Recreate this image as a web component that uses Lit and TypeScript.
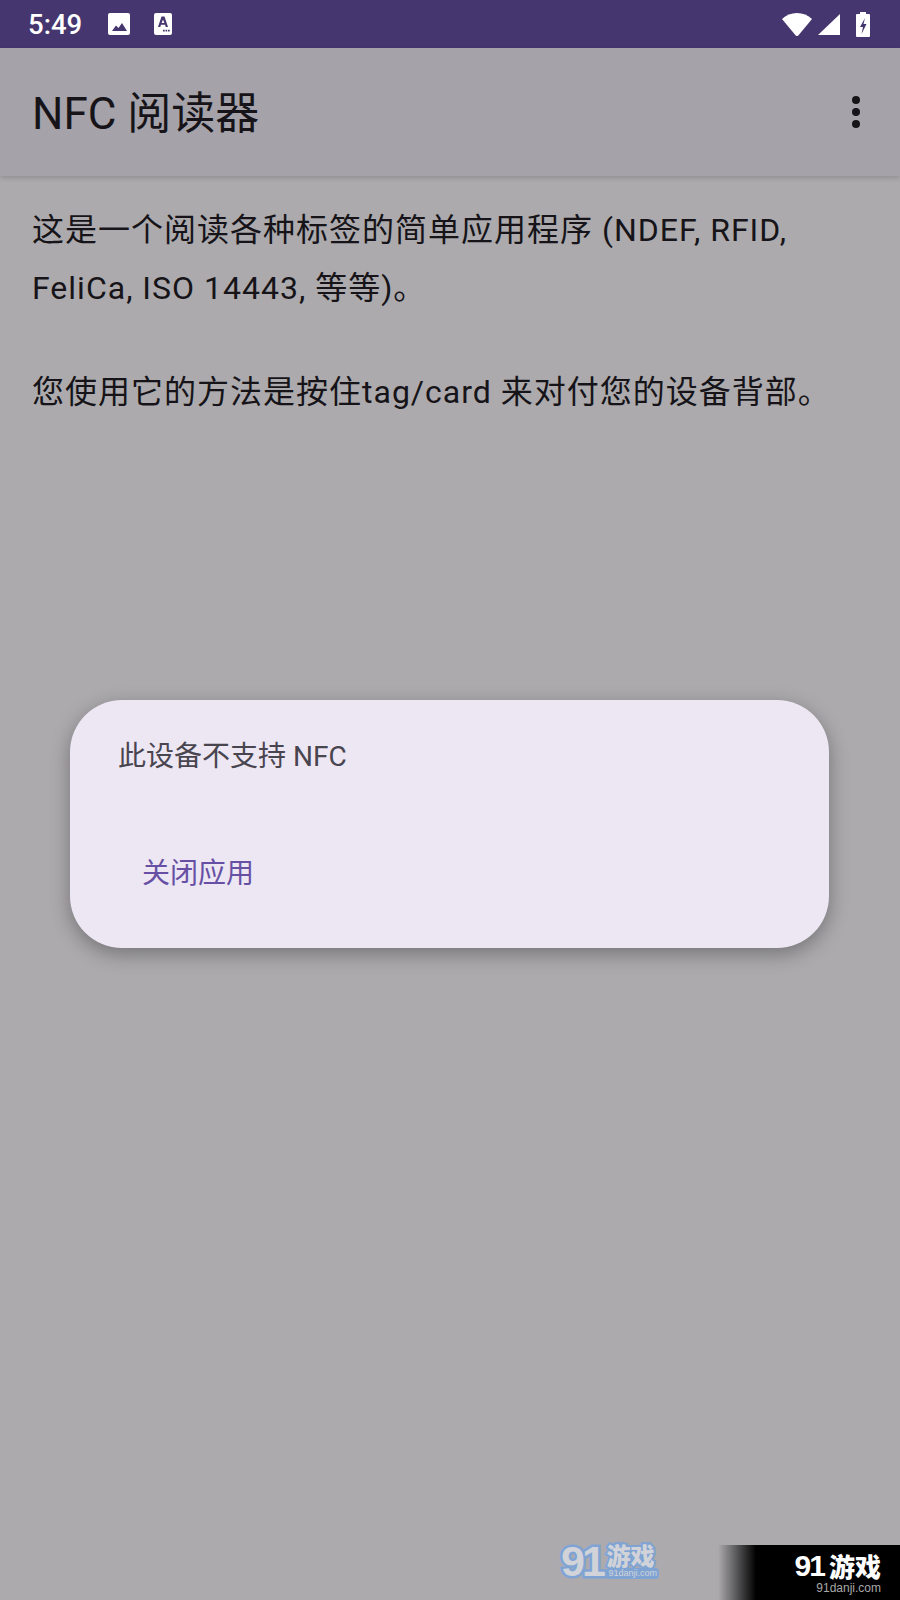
import { LitElement, html, css } from 'lit';
import { customElement } from 'lit/decorators.js';

@customElement('app-root')
export class AppRoot extends LitElement {
  static styles = css`
    :host {
      display: block;
      position: relative;
      width: 900px;
      height: 1600px;
      overflow: hidden;
      background: #acaaad;
      font-family: Roboto, 'Noto Sans CJK SC', sans-serif;
      color: #161418;
    }
    .status {
      height: 48px;
      background: #46366f;
      color: #fff;
      display: flex;
      align-items: center;
      padding: 0 30px 0 28px;
      box-sizing: border-box;
    }
    .time { font-size: 27.500px; font-weight: 500; width: 80px; }
    .status svg { display: block; }
    .status .a { margin-left: 24px; }
    .status .wifi { margin-right: 6px; }
    .status .signal { margin-right: 16px; }
    .spacer { flex: 1; }
    .bar {
      height: 128px;
      background: #a5a2aa;
      display: flex;
      align-items: center;
      padding: 0 32px;
      box-sizing: border-box;
      box-shadow: 0 2px 5px rgba(0, 0, 0, 0.16);
      position: relative;
    }
    .title { flex: 1; font-size: 44px; line-height: 64px; margin-top: 4px; }
    .kebab { margin-right: 8px; }
    .content {
      padding: 25px 32px 0;
      font-size: 32px;
      line-height: 58px;
      letter-spacing: 1px;
    }
    .content p { margin: 0 0 46px; }
    .dialog {
      position: absolute;
      left: 70px;
      top: 700px;
      width: 759px;
      height: 248px;
      box-sizing: border-box;
      background: #ece7f3;
      border-radius: 52px;
      box-shadow: 0 6px 20px rgba(0, 0, 0, 0.32);
      padding: 37px 48px 0;
    }
    .msg { font-size: 28px; line-height: 40px; color: #49454f; }
    .btn { margin: 77px 0 0 24px; font-size: 28px; line-height: 40px; color: #6750a4; }
    .wm1, .wm2 {
      position: absolute;
      font-family: 'Noto Sans CJK SC', sans-serif;
      font-weight: 900;
    }
    .wm1 {
      left: 561px;
      top: 1543px;
      width: 98px;
      height: 40px;
      display: flex;
      align-items: flex-start;
      color: #d2d3d8;
    }
    .wm1 .n {
      font-size: 43px;
      line-height: 36px;
      font-family: 'Liberation Sans', sans-serif;
      font-weight: 700;
      letter-spacing: -3px;
      -webkit-text-stroke: 5px #7fa4d4;
      paint-order: stroke fill;
      width: 46px;
    }
    .wm1 .t {
      font-size: 24px;
      line-height: 24px;
      color: #d2d3d8;
      -webkit-text-stroke: 4px #7fa4d4;
      paint-order: stroke fill;
      display: block;
    }
    .wm1 .u {
      font: 400 9px/11px 'Liberation Sans', sans-serif;
      color: #d2d3d8;
      background: #7fa4d4;
      border-radius: 4px;
      padding: 0 2px;
      display: block;
      margin-top: 1px;
      white-space: nowrap;
    }
    .wm2 {
      left: 718px;
      top: 1545px;
      width: 182px;
      height: 55px;
      background: linear-gradient(90deg, rgba(0, 0, 0, 0) 0, #000 38px);
      color: #fff;
      box-sizing: border-box;
      padding: 8px 19px 0 0;
      text-align: right;
    }
    .wm2 .l1 {
      display: flex;
      justify-content: flex-end;
      align-items: center;
      height: 26px;
      gap: 5px;
    }
    .wm2 .n {
      font-family: 'Liberation Sans', sans-serif;
      font-weight: 700;
      font-size: 30px;
      line-height: 26px;
      letter-spacing: -2px;
    }
    .wm2 .t { font-size: 26px; line-height: 26px; }
    .wm2 .u {
      font: 400 12px/14px 'Liberation Sans', sans-serif;
      color: #a8a8a8;
      margin-top: 2px;
    }
  `;

  render() {
    return html`
      <div class="status">
        <span class="time">5:49</span>
        <svg width="22" height="22" viewBox="0 0 22 22">
          <path fill="#fff" fill-rule="evenodd" d="M2 0h18a2 2 0 0 1 2 2v18a2 2 0 0 1-2 2H2a2 2 0 0 1-2-2V2a2 2 0 0 1 2-2zM4 18l4-5.500 2.500 2.500L14 10l5 8z"/>
        </svg>
        <svg class="a" width="18" height="22" viewBox="0 0 18 22">
          <path fill="#fff" fill-rule="evenodd" d="M2 0h14a2 2 0 0 1 2 2v18a2 2 0 0 1-2 2H2a2 2 0 0 1-2-2V2a2 2 0 0 1 2-2zM7.500 3.500 4 14h2.300l.6-2.200h4.200l.6 2.200H14L10.500 3.500zM9 6.500l1.400 3.500H7.600zM9 16.800v1.700h1.700v-1.700zM11.500 16.800v1.700h1.700v-1.700zM14 16.800v1.700h1.700v-1.700z"/>
        </svg>
        <span class="spacer"></span>
        <svg class="wifi" width="30" height="23" viewBox="0 0 30 23">
          <path fill="#fff" d="M0 6C4 2.300 9.300 0 15 0s11 2.300 15 6L16.500 22.200a2 2 0 0 1-3 0z"/>
        </svg>
        <svg class="signal" width="22" height="21" viewBox="0 0 22 21">
          <path fill="#fff" d="M0 21 22 0v21z"/>
        </svg>
        <svg width="14" height="25" viewBox="0 0 14 25">
          <path fill="#fff" fill-rule="evenodd" d="M4 0h6v2h3a1 1 0 0 1 1 1v21a1 1 0 0 1-1 1H1a1 1 0 0 1-1-1V3a1 1 0 0 1 1-1h3zM9 6 4 15h3l-1.500 7L10.500 12H7.500z"/>
        </svg>
      </div>
      <div class="bar">
        <div class="title">NFC 阅读器</div>
        <svg class="kebab" width="8" height="32" viewBox="0 0 8 32">
          <circle cx="4" cy="4" r="4" fill="#161418"/>
          <circle cx="4" cy="16" r="4" fill="#161418"/>
          <circle cx="4" cy="28" r="4" fill="#161418"/>
        </svg>
      </div>
      <div class="content">
        <p>这是一个阅读各种标签的简单应用程序 (NDEF, RFID, FeliCa, ISO 14443, 等等)。</p>
        <p>您使用它的方法是按住tag/card 来对付您的设备背部。</p>
      </div>
      <div class="dialog">
        <div class="msg">此设备不支持 NFC</div>
        <div class="btn">关闭应用</div>
      </div>
      <div class="wm1">
        <span class="n">91</span>
        <span>
          <span class="t">游戏</span>
          <span class="u">91danji.com</span>
        </span>
      </div>
      <div class="wm2">
        <div class="l1"><span class="n">91</span><span class="t">游戏</span></div>
        <div class="u">91danji.com</div>
      </div>
    `;
  }
}
